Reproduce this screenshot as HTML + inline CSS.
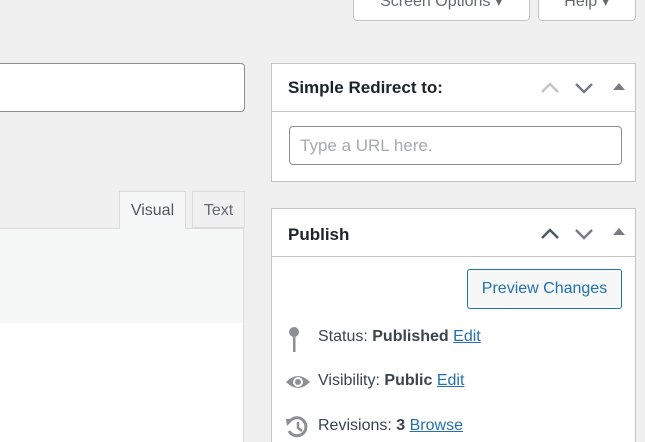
<!DOCTYPE html>
<html><head><style>
*{box-sizing:border-box;margin:0;padding:0}
html,body{width:645px;height:442px;overflow:hidden}
body{background:#f0f0f1;font-family:"Liberation Sans",sans-serif;color:#3c434a;position:relative;font-size:15px}
.abs{position:absolute}
.btn{background:#fff;border:1px solid #c3c4c7;border-radius:0 0 4px 4px;border-top:none;color:#646970;font-size:16px;text-align:center}
.box{background:#fff;border:1px solid #c3c4c7}
.hdr{position:absolute;left:0;right:0;top:0;height:48px;border-bottom:1px solid #c3c4c7}
.hdr b{position:absolute;left:16px;top:14px;font-size:17px;color:#1d2327}
.ctl{position:absolute;top:17px}
a{color:#2271b1;text-decoration:underline}
.row{position:absolute;left:46px;font-size:16px;color:#3c434a}
</style></head><body>
<div class="abs btn" style="left:353px;top:-10px;width:177px;height:31px;line-height:24px">Screen Options &#9662;</div>
<div class="abs btn" style="left:538px;top:-10px;width:98px;height:31px;line-height:24px">Help &#9662;</div>

<div class="abs" style="left:-10px;top:63px;width:255px;height:49px;background:#fff;border:1px solid #8c8f94;border-radius:4px"></div>

<div class="abs" style="left:119px;top:191px;width:67px;height:38px;background:#f6f7f7;border:1px solid #dcdcde;border-bottom:none;font-size:16px;color:#50575e;line-height:37px;text-align:center;z-index:2">Visual</div>
<div class="abs" style="left:192px;top:191px;width:53px;height:37px;background:#f0f0f1;border:1px solid #dcdcde;font-size:16px;color:#646970;line-height:37px;text-align:center">Text</div>
<div class="abs" style="left:-5px;top:228px;width:249px;height:96px;background:#f6f7f7;border:1px solid #dcdcde"></div>
<div class="abs" style="left:-5px;top:323px;width:249px;height:130px;background:#fff;border-right:1px solid #dcdcde"></div>

<div class="abs box" style="left:271px;top:63px;width:365px;height:119px">
 <div class="hdr"><b>Simple Redirect to:</b>
  <svg class="ctl" style="left:268px" width="20" height="14" viewBox="0 0 20 14"><path d="M2 11L10 3L18 11" stroke="#c3c4c7" stroke-width="2.5" fill="none"/></svg>
  <svg class="ctl" style="left:302px" width="20" height="14" viewBox="0 0 20 14"><path d="M2 3L10 11L18 3" stroke="#787c82" stroke-width="2.5" fill="none"/></svg>
  <svg class="ctl" style="left:341px;top:18px" width="12" height="10"><path d="M0 8L6 1L12 8Z" fill="#787c82"/></svg>
 </div>
 <div class="abs" style="left:17px;top:62px;width:333px;height:39px;border:1px solid #8c8f94;border-radius:4px;color:#a7aaad;font-size:17px;line-height:37px;padding-left:10px">Type a URL here.</div>
</div>

<div class="abs box" style="left:271px;top:208px;width:365px;height:250px">
 <div class="hdr"><b style="top:16px">Publish</b>
  <svg class="ctl" style="left:268px;top:18px" width="20" height="14" viewBox="0 0 20 14"><path d="M2 11L10 3L18 11" stroke="#50575e" stroke-width="2.5" fill="none"/></svg>
  <svg class="ctl" style="left:302px;top:18px" width="20" height="14" viewBox="0 0 20 14"><path d="M2 3L10 11L18 3" stroke="#787c82" stroke-width="2.5" fill="none"/></svg>
  <svg class="ctl" style="left:341px;top:18px" width="12" height="10"><path d="M0 8L6 1L12 8Z" fill="#787c82"/></svg>
 </div>
 <div class="abs" style="left:195px;top:60px;width:155px;height:40px;border:1px solid #2271b1;border-radius:3px;background:#f6f7f7;color:#2271b1;font-size:16px;line-height:38px;text-align:center">Preview Changes</div>
 <svg class="abs" style="left:16px;top:117px" width="12" height="28" viewBox="0 0 12 28"><circle cx="6" cy="6" r="5" fill="#8c8f94"/><rect x="5" y="8" width="2.5" height="18" fill="#8c8f94"/></svg>
 <div class="row" style="top:119px">Status: <b>Published</b> <a>Edit</a></div>
 <svg class="abs" style="left:13px;top:165px" width="26" height="16" viewBox="0 0 26 16"><path d="M1 8Q13 -4 25 8Q13 20 1 8Z" fill="#8c8f94"/><circle cx="13" cy="8" r="5" fill="#fff"/><circle cx="13" cy="8" r="3" fill="#8c8f94"/></svg>
 <div class="row" style="top:163px">Visibility: <b>Public</b> <a>Edit</a></div>
 <svg class="abs" style="left:13px;top:206px" width="24" height="24" viewBox="0 0 24 24"><path d="M6 5A9 9 0 1 1 4 16" stroke="#8c8f94" stroke-width="3" fill="none"/><path d="M1 4L9 4L2 11Z" fill="#8c8f94"/><path d="M13 7V13L17 16" stroke="#8c8f94" stroke-width="2.5" fill="none"/></svg>
 <div class="row" style="top:208px">Revisions: <b>3</b> <a>Browse</a></div>
</div>
</body></html>
